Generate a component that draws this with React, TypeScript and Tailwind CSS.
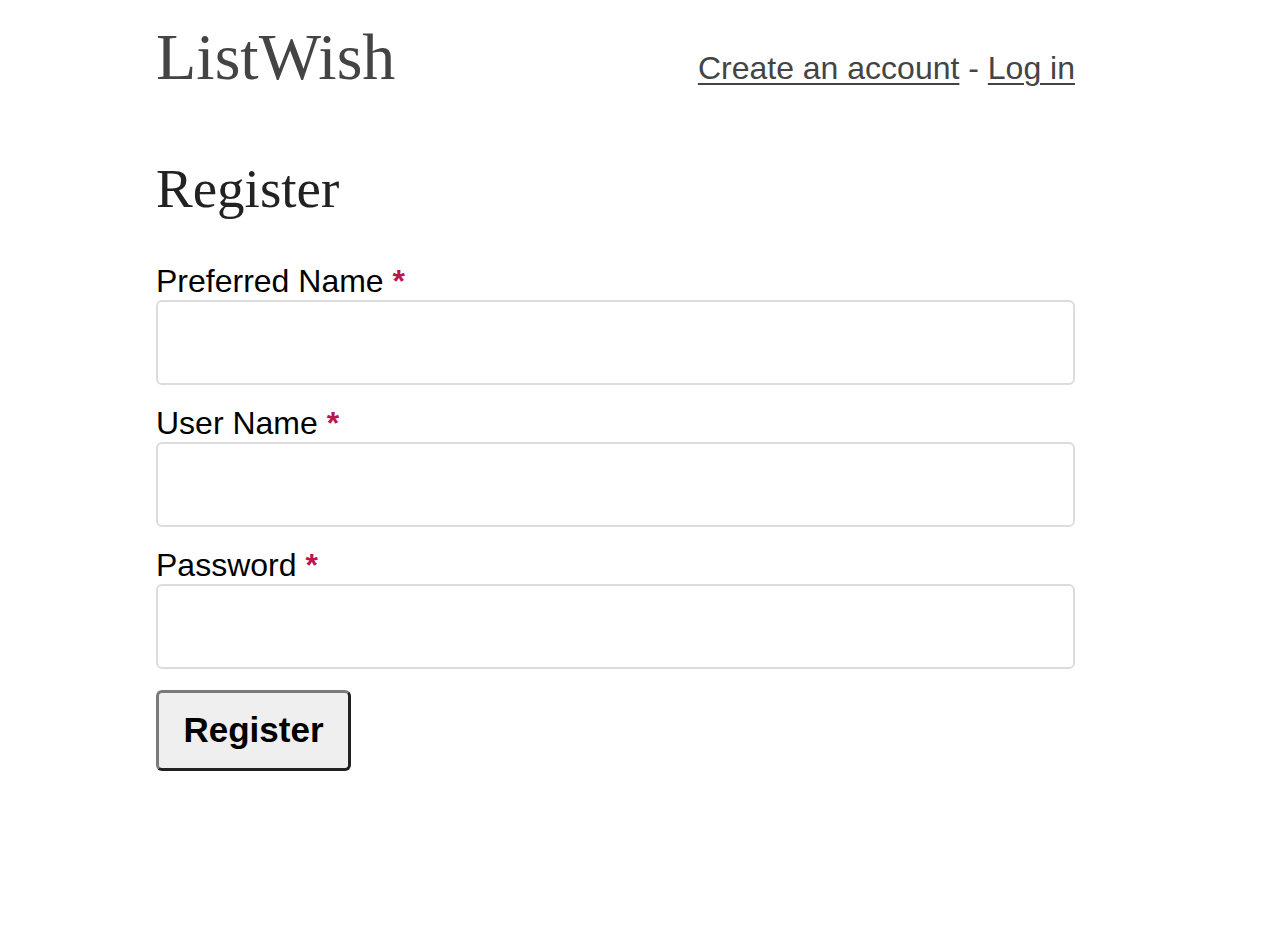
import React from "react";

const serif = { fontFamily: '"Liberation Serif", "DejaVu Serif", serif' };

function Field({ label, type = "text" }: { label: string; type?: string }) {
  return (
    <div className="flex flex-col">
      <label className="text-[32px] leading-[37px] text-black">
        {label} <span className="font-bold text-[#b8194d]">*</span>
      </label>
      <input
        type={type}
        className="h-[85px] w-full rounded-[6px] border-2 border-[#dcdcdc] bg-white px-3 text-[32px] outline-none"
      />
    </div>
  );
}

export default function App() {
  return (
    <div
      className="min-h-[938px] bg-white"
      style={{ fontFamily: '"Liberation Sans", Arial, sans-serif' }}
    >
      <div className="ml-[156px] w-[919px] pt-[20px]">
        <header className="flex items-baseline justify-between">
          <div className="text-[66px] leading-[74px] text-[#444444]" style={serif}>
            ListWish
          </div>
          <nav className="text-[32px] leading-[40px] text-[#444444]">
            <a href="#" className="underline decoration-2 underline-offset-[4px]">
              Create an account
            </a>
            <span> - </span>
            <a href="#" className="underline decoration-2 underline-offset-[4px]">
              Log in
            </a>
          </nav>
        </header>

        <h1 className="mt-[64px] text-[55px] leading-[62px] text-[#222222]" style={serif}>
          Register
        </h1>

        <form className="mt-[43px] flex flex-col gap-[20px]">
          <Field label="Preferred Name" />
          <Field label="User Name" />
          <Field label="Password" type="password" />
          <div className="pt-[1px]">
            <button
              type="button"
              className="h-[81px] w-[195px] rounded-[6px] border-[3px] border-t-[#7a7a7a] border-l-[#7a7a7a] border-b-[#222222] border-r-[#222222] bg-[#efefef] text-[35px] font-bold text-black"
            >
              Register
            </button>
          </div>
        </form>
      </div>
    </div>
  );
}
